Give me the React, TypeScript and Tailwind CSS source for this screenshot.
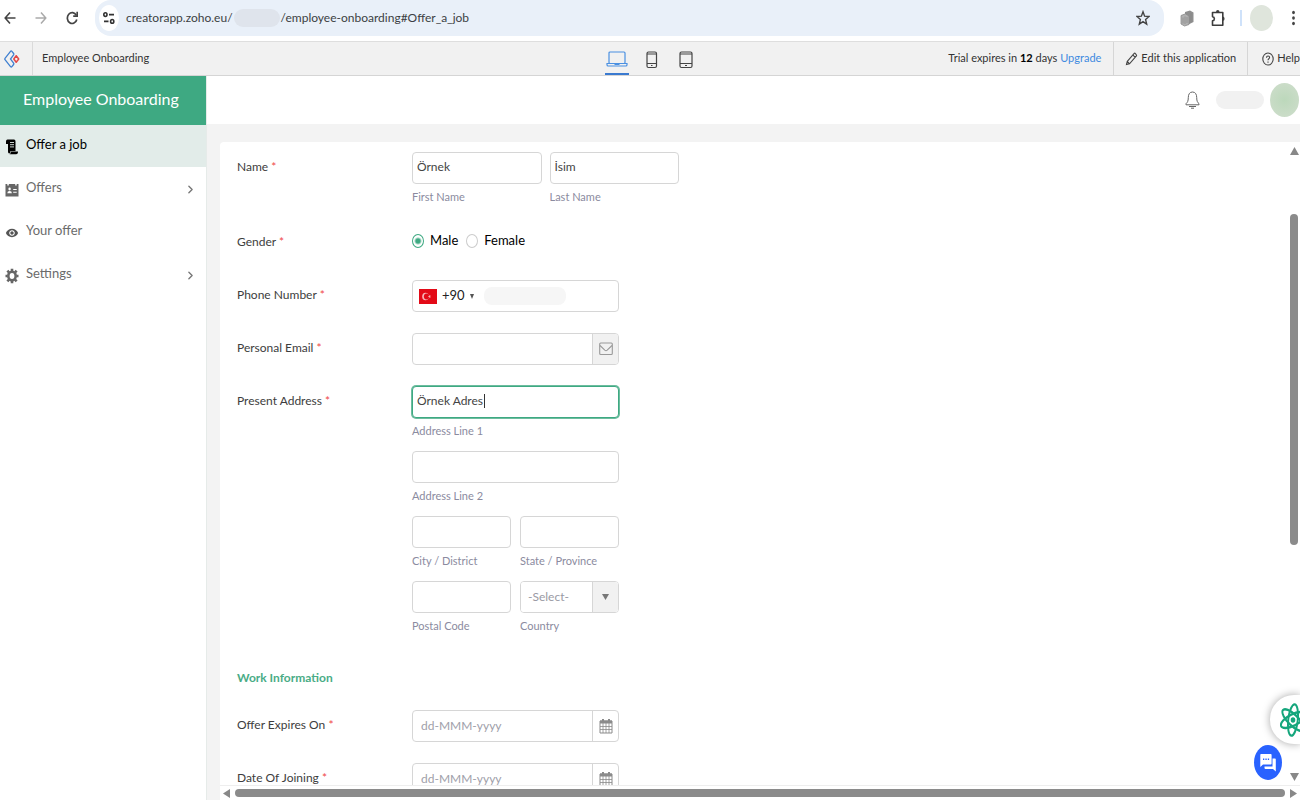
import React from 'react';
import type { ReactNode } from 'react';
import { IoMdEye } from 'react-icons/io';
import { ChevronRight } from 'lucide-react';

const inputClass =
  'block h-8 w-full min-w-0 rounded border border-[#d6d6d6] bg-white px-1 pb-1 text-xs text-[#444] outline-none';

function BrowserBar() {
  return (
    <header className="flex h-[41px] shrink-0 items-start overflow-hidden bg-white text-[#444]">
      <nav className="flex h-9 shrink-0 items-center gap-[19px] pl-1">
        <button aria-label="Back" type="button">
          <svg width="12" height="14" viewBox="0 0 12 14" fill="none" stroke="#444" strokeWidth="1.6">
            <path d="M11.5 7H1.4M6 1.5 1.2 7 6 12.500" />
          </svg>
        </button>
        <button aria-label="Forward" type="button">
          <svg width="12" height="14" viewBox="0 0 12 14" fill="none" stroke="#aaa" strokeWidth="1.5">
            <path d="M.5 7h10.100M6 1.500 10.800 7 6 12.500" />
          </svg>
        </button>
        <button aria-label="Reload" type="button">
          <svg width="12" height="14" viewBox="0 0 12 14" fill="none" stroke="#444" strokeWidth="1.7">
            <path d="M10.300 4.300A4.800 5.400 0 1 0 10.800 8.500" />
            <path d="M11.200.8v4.400H7.200" />
          </svg>
        </button>
      </nav>
      <div className="ml-[17px] flex h-9 min-w-0 flex-1 items-center rounded-2xl bg-[#e9f0f9] px-1">
        <button
          aria-label="Site information"
          type="button"
          className="flex h-[26px] w-5 shrink-0 items-center justify-center rounded-[50%] bg-white"
        >
          <svg width="12" height="14" viewBox="0 0 12 14" fill="none" stroke="#333" strokeWidth="1.600">
            <ellipse cx="2.400" cy="3.600" rx="1.600" ry="1.900" />
            <path d="M6 3.600h5M1 10.400h4.500" />
            <ellipse cx="9.200" cy="10.400" rx="1.600" ry="1.900" />
          </svg>
        </button>
        <p className="ml-[7px] flex min-w-0 flex-1 items-center whitespace-nowrap text-xs text-[#3c3f43]">
          creatorapp.zoho.eu/
          <span className="mx-px h-[18px] w-[46px] rounded-full bg-[#dfe4ec]" />
          /employee-onboarding#Offer_a_job
        </p>
        <button aria-label="Bookmark" type="button" className="mr-2.5">
          <svg width="14" height="16" viewBox="0 0 14 16" fill="none" stroke="#444" strokeWidth="1.400">
            <path d="m7 1.800 1.600 4.400 4.400.3-3.400 3.100 1.100 4.600L7 11.700l-3.700 2.500 1.100-4.600L1 6.500l4.400-.3Z" />
          </svg>
        </button>
      </div>
      <div className="flex h-9 shrink-0 items-center pl-4">
        <svg width="14" height="17" viewBox="0 0 14 17">
          <path d="m5 2 5-1.500 3.500 2V12l-4 2H5Z" fill="#8f8f8f" />
          <path d="m1 5.500 4.500-1.700L9 6v8.500L4.500 16 1 14Z" fill="#b1b1b1" stroke="#8a8a8a" strokeWidth=".8" />
          <path d="M3 7.500v6M5 6.500v7.500M7 7v6M11 3v9" stroke="#888" strokeWidth=".7" />
        </svg>
        <svg className="ml-[17px]" width="15" height="18" viewBox="0 0 15 18" fill="none">
          <path
            d="M1.500 3.500h10.300v12.700H1.500v-4.300c2.500-.3 2.500-4 0-4.300Z"
            stroke="#3d3d3d"
            strokeWidth="1.600"
            strokeLinejoin="round"
          />
          <path d="M5 3a1.700 2 0 0 1 3.500 0ZM12 7.500a2 2.200 0 0 1 0 4.300Z" fill="#3d3d3d" />
        </svg>
        <span className="ml-3.5 h-4 w-0.5 bg-[#cfe2fa]" />
        <span className="ml-2 h-[26px] w-[23px] rounded-[50%] bg-[#dfe5dc]" />
        <svg className="ml-[18px] mr-1" width="5" height="16" viewBox="0 0 5 16" fill="#444">
          <ellipse cx="2.500" cy="2.500" rx="1.400" ry="1.700" />
          <ellipse cx="2.500" cy="8" rx="1.400" ry="1.700" />
          <ellipse cx="2.500" cy="13.500" rx="1.400" ry="1.700" />
        </svg>
      </div>
    </header>
  );
}

function AppBar() {
  return (
    <div className="grid h-[35px] shrink-0 grid-cols-[1fr_auto_1fr] overflow-hidden border-y border-t-[#dedede] border-b-[#d5d5d5] bg-[#f1f1f1] text-[11px] text-[#333]">
      <div className="flex items-center">
        <a href="#home" aria-label="Creator home" className="flex h-full w-[33px] items-center border-r border-[#dadada] pl-1">
          <svg width="16" height="18" viewBox="0 0 16 18" fill="none">
            <path
              d="M6.500 1.300 1 8.300a1 1 0 0 0 0 1.300l5.500 7c.5.500 1 .5 1.400 0l1.700-2.100c.4-.5.300-.9 0-1.400L6.500 9l3.100-4.200c.3-.5.400-.8 0-1.300L7.900 1.300c-.4-.5-1-.5-1.400 0Z"
              stroke="#3f7fd0"
              strokeWidth="1.300"
            />
            <path d="m12.200 5.700 2.500 3.300-2.500 3.300L9.800 9Z" stroke="#e24848" strokeWidth="1.500" strokeLinejoin="round" />
          </svg>
        </a>
        <span className="pl-[9px]">Employee Onboarding</span>
      </div>
      <div className="flex h-full items-stretch gap-3 pl-0.5">
        <button aria-label="Desktop" type="button" className="flex w-6 items-center justify-center border-b-2 border-[#3a7ad0] pt-0.5">
          <svg width="22" height="18" viewBox="0 0 22 18" fill="none" stroke="#4a90e2" strokeWidth="1.200">
            <rect x="3" y="2" width="16" height="11.500" rx="1" />
            <path d="M1 13.500h20v1.200q0 1.300-1.200 1.300H2.200Q1 16 1 14.700ZM8.500 14.500h5" />
          </svg>
        </button>
        <button aria-label="Phone" type="button" className="flex w-[22px] items-center justify-center pt-0.5">
          <svg width="12" height="18" viewBox="0 0 12 18" fill="none" stroke="#444" strokeWidth="1.200">
            <rect x="1" y="1" width="9.500" height="15.500" rx="1.500" />
            <path d="M1 12.500h9.500M1 3h9.500M5 14.500h1.500" />
          </svg>
        </button>
        <button aria-label="Tablet" type="button" className="flex w-[22px] items-center justify-center pt-0.5">
          <svg width="14" height="18" viewBox="0 0 14 18" fill="none" stroke="#444" strokeWidth="1.200">
            <rect x="1" y="1" width="12" height="15.500" rx="1.500" />
            <path d="M1 12.500h12M1 3h12M6 14.500h2" />
          </svg>
        </button>
      </div>
      <div className="flex min-w-0 items-center justify-end whitespace-nowrap">
        <p className="pr-3">
          Trial expires in <b className="text-black">12</b> days{' '}
          <a href="#upgrade" className="text-[#3f8ae0]">
            Upgrade
          </a>
        </p>
        <button type="button" className="flex h-full items-center gap-[3px] border-l border-[#d6d6d6] px-[11px]">
          <svg width="13" height="14" viewBox="0 0 13 14" fill="none" stroke="#444" strokeWidth="1.100">
            <path d="m2.300 9.300 6.900-7.900c.3-.4.700-.4 1 0l1.200 1.400c.3.300.3.700 0 1.100l-6.900 7.900-3 .8Zm5.600-6.400 2.200 2.500M2.300 9.300l2.200 2.500" />
          </svg>
          Edit this application
        </button>
        <button type="button" className="flex h-full items-center gap-[3px] border-l border-[#d6d6d6] pl-3.5">
          <svg width="12" height="14" viewBox="0 0 12 14" fill="none" stroke="#444" strokeWidth="1.100">
            <ellipse cx="6" cy="7" rx="5.200" ry="6" />
            <path d="M4.500 5.700C4.500 3.400 7.600 3.400 7.600 5.500 7.600 6.800 6 6.800 6 8.300M6 9.500v1.200" />
          </svg>
          Help
        </button>
      </div>
    </div>
  );
}

function ScrollIcon() {
  return (
    <svg width="14" height="16" viewBox="0 0 14 16">
      <path d="M2.500.5H9q1.500.2 1.500 2V12h-5v.5q0 2-1.300 2-1.200 0-1.200-2V5H1V2.500Q1 .7 2.500.5Z" fill="#000" />
      <path d="M6 12.500h7v.8q-.2 2-1.800 2H4.500q1.500-.5 1.500-2.800Z" fill="#000" />
      <path d="M5 3.500h4M5 5.700h4M5 7.900h4" stroke="#e2ece9" strokeWidth=".9" />
    </svg>
  );
}

function ContactIcon() {
  return (
    <svg width="14" height="14" viewBox="0 0 14 14">
      <path d="M.5 1h1.800v1.500h1.500V1h6.400v1.500h1.500V1h1.800v12.500H.5Z" fill="#666" />
      <ellipse cx="4.600" cy="6" rx="1.200" ry="1.400" fill="#fff" />
      <path d="M2.300 10.300q0-2.300 2.300-2.300t2.300 2.300ZM8.200 6h3.500v1H8.200ZM8.200 8.700h3.500v1H8.200Z" fill="#fff" />
    </svg>
  );
}

function GearIcon() {
  return (
    <svg width="14" height="16" viewBox="0 0 14 16" fill="none" stroke="#666">
      <ellipse cx="7" cy="8" rx="3.700" ry="4.300" strokeWidth="2.600" />
      <path
        d="M7 .8v2.500M7 12.700v2.500M.5 8h2M11.500 8h2M2.400 2.700 4 4.500M10 11.500l1.600 1.800M11.600 2.700 10 4.500M4 11.500l-1.600 1.800"
        strokeWidth="2.600"
      />
    </svg>
  );
}

function NavItem({ icon, label, active, expandable }: { icon: ReactNode; label: string; active?: boolean; expandable?: boolean }) {
  return (
    <li>
      <a
        href="#page"
        className={
          active
            ? 'flex h-[42px] items-center bg-[#e2ece9] pl-[5px] pr-[9px] text-[13px] text-black'
            : 'flex h-[42px] items-center pl-[5px] pr-[9px] text-[13px] text-[#6b6b6b]'
        }
      >
        <span className="flex w-[21px] pt-0.5">{icon}</span>
        <span className="flex-1 pb-0.5">{label}</span>
        {expandable && <ChevronRight size={13} strokeWidth={2.5} color="#777" />}
      </a>
    </li>
  );
}

function Sidebar() {
  return (
    <aside className="w-[207px] shrink-0 border-r border-[#e6ebe9] bg-white">
      <h1 className="flex h-[49px] items-center bg-[#3ea982] pb-1 pl-[23px] text-base text-white">Employee Onboarding</h1>
      <ul className="flex flex-col gap-px">
        <NavItem active label="Offer a job" icon={<ScrollIcon />} />
        <NavItem expandable label="Offers" icon={<ContactIcon />} />
        <NavItem label="Your offer" icon={<IoMdEye size={14} color="#555" />} />
        <NavItem expandable label="Settings" icon={<GearIcon />} />
      </ul>
    </aside>
  );
}

function Row({ label, htmlFor, children }: { label: string; htmlFor: string; children: ReactNode }) {
  return (
    <div className="flex min-h-8 items-start">
      <label htmlFor={htmlFor} className="w-[175px] shrink-0 text-xs leading-[30px] text-[#3d3d3d]">
        {label} <span className="text-[#f04848]">*</span>
      </label>
      {children}
    </div>
  );
}

function Captioned({ id, caption, children }: { id: string; caption: string; children: ReactNode }) {
  return (
    <div className="min-w-0 flex-1">
      {children}
      <label htmlFor={id} className="block h-[22px] pt-[5px] text-[11px] leading-4 text-[#8b8ba0]">
        {caption}
      </label>
    </div>
  );
}

function CalendarIcon() {
  return (
    <svg width="14" height="16" viewBox="0 0 14 16" fill="none" stroke="#8b8b8b">
      <path d="M1 3h12v12H1Z" />
      <path d="M1 4h12" strokeWidth="3" />
      <path d="M4 1v4M10 1v4" strokeWidth="2" />
      <path d="M1 8.500h12M1 11.500h12M4 5v10M7 5v10M10 5v10" strokeWidth=".8" />
    </svg>
  );
}

function DateField({ id }: { id: string }) {
  return (
    <div className="flex h-8 w-[207px] overflow-hidden rounded border border-[#d6d6d6]">
      <input id={id} placeholder="dd-MMM-yyyy" className="min-w-0 flex-1 px-2 text-xs outline-none placeholder:text-[#a0a0aa]" />
      <button type="button" aria-label="Open calendar" className="flex w-[26px] items-center justify-center border-l border-[#d6d6d6]">
        <CalendarIcon />
      </button>
    </div>
  );
}

function Radio({ id, label, checked }: { id: string; label: string; checked?: boolean }) {
  return (
    <label htmlFor={id} className="flex items-center gap-1.5 text-[13px] text-black">
      <input
        id={id}
        type="radio"
        name="gender"
        defaultChecked={checked}
        className="h-3.5 w-3 appearance-none rounded-[50%] border border-[#ccc] checked:border-[#3ea982] checked:bg-[radial-gradient(circle,#3ea982_2px,white_4px)]"
      />
      {label}
    </label>
  );
}

function OfferForm() {
  return (
    <form className="flex flex-col gap-[21px] pl-[17px] pt-2.5">
      <Row label="Name" htmlFor="first-name">
        <div className="flex w-[267px] gap-2">
          <Captioned id="first-name" caption="First Name">
            <input id="first-name" defaultValue="Örnek" className={inputClass} />
          </Captioned>
          <Captioned id="last-name" caption="Last Name">
            <input id="last-name" defaultValue="İsim" className={inputClass} />
          </Captioned>
        </div>
      </Row>
      <Row label="Gender" htmlFor="male">
        <div className="flex h-7 items-center gap-2">
          <Radio id="male" label="Male" checked />
          <Radio id="female" label="Female" />
        </div>
      </Row>
      <Row label="Phone Number" htmlFor="phone">
        <div className="flex h-8 w-[207px] items-center rounded border border-[#d6d6d6] px-1.5">
          <button type="button" className="flex items-center gap-[5px] text-[13px] text-[#222]">
            <svg width="18" height="15" viewBox="0 0 18 15">
              <path d="M0 0h18v15H0Z" fill="#e30a17" />
              <ellipse cx="6.500" cy="7.500" rx="3.300" ry="3.800" fill="#f6b5b8" />
              <ellipse cx="7.500" cy="7.500" rx="2.600" ry="3" fill="#e30a17" />
              <path d="m8.800 7.500 1.200-.5V5.800l.7 1 1.200-.3-.7 1 .7 1-1.200-.3-.7 1V8Z" fill="#f6b5b8" />
            </svg>
            +90
            <svg width="4" height="5" viewBox="0 0 4 5">
              <path d="M0 0h4L2 5Z" fill="#555" />
            </svg>
          </button>
          <input id="phone" className="ml-2.5 h-[18px] w-[82px] rounded-lg bg-[#f6f6f6] outline-none" />
        </div>
      </Row>
      <Row label="Personal Email" htmlFor="email">
        <div className="flex h-8 w-[207px] overflow-hidden rounded border border-[#d6d6d6]">
          <input id="email" type="email" className="min-w-0 flex-1 px-1 text-xs outline-none" />
          <span className="flex w-[26px] items-center justify-center border-l border-[#d6d6d6] bg-[#f1f1f1]">
            <svg width="14" height="14" viewBox="0 0 14 14" fill="none" stroke="#999" strokeWidth="1.100">
              <rect x=".7" y="1" width="12.600" height="11.500" rx="1" />
              <path d="M1 3.500 5.800 8.200q1.200 1 2.400 0L13 3.500" />
            </svg>
          </span>
        </div>
      </Row>
      <Row label="Present Address" htmlFor="address-1">
        <div className="flex w-[207px] flex-col gap-[11px]">
          <Captioned id="address-1" caption="Address Line 1">
            <div className="relative">
              <input
                id="address-1"
                defaultValue="Örnek Adres"
                className="block h-8 w-full rounded border border-[#3ea982] bg-white px-1 pb-1 text-xs text-[#444] caret-transparent shadow-[0_0_0_1px_#6dbd9f] outline-none"
              />
              <span className="absolute left-[72px] top-2 h-3.5 w-px bg-[#333]" />
            </div>
          </Captioned>
          <Captioned id="address-2" caption="Address Line 2">
            <input id="address-2" className={inputClass} />
          </Captioned>
          <div className="flex gap-[9px]">
            <Captioned id="city" caption="City / District">
              <input id="city" className={inputClass} />
            </Captioned>
            <Captioned id="state" caption="State / Province">
              <input id="state" className={inputClass} />
            </Captioned>
          </div>
          <div className="flex gap-[9px]">
            <Captioned id="postal" caption="Postal Code">
              <input id="postal" className={inputClass} />
            </Captioned>
            <Captioned id="country" caption="Country">
              <div className="relative h-8 overflow-hidden rounded border border-[#d6d6d6]">
                <select id="country" className="h-full w-full appearance-none bg-white pl-[7px] text-xs text-[#9a9aa4] outline-none">
                  <option>-Select-</option>
                </select>
                <span className="pointer-events-none absolute inset-y-0 right-0 flex w-[26px] items-center justify-center border-l border-[#d6d6d6] bg-[#f1f1f1]">
                  <svg width="7" height="6" viewBox="0 0 7 6">
                    <path d="M0 0h7L3.500 6Z" fill="#777" />
                  </svg>
                </span>
              </div>
            </Captioned>
          </div>
        </div>
      </Row>
      <h2 className="h-[33px] pt-[11px] text-xs font-bold leading-[22px] text-[#4aac86]">Work Information</h2>
      <Row label="Offer Expires On" htmlFor="offer-expires">
        <DateField id="offer-expires" />
      </Row>
      <Row label="Date Of Joining" htmlFor="joining">
        <DateField id="joining" />
      </Row>
    </form>
  );
}

function FloatingButtons() {
  return (
    <>
      <button
        type="button"
        aria-label="Assistant"
        className="absolute bottom-14 right-0 flex h-[49px] w-[30px] items-center overflow-hidden rounded-l-3xl bg-white pl-2.5 shadow-[0_0_8px_rgba(0,0,0,0.35)]"
      >
        <svg width="26" height="36" viewBox="0 0 26 36" fill="none" stroke="#15a67c" strokeWidth="2.400" className="shrink-0">
          <g transform="translate(13 18) scale(.82 1)">
            <ellipse rx="5.800" ry="15.800" transform="rotate(8)" />
            <ellipse rx="5.800" ry="15.800" transform="rotate(68)" />
            <ellipse rx="5.800" ry="15.800" transform="rotate(128)" />
            <circle r="2.800" fill="#15a67c" stroke="none" />
          </g>
        </svg>
      </button>
      <button
        type="button"
        aria-label="Chat"
        className="absolute bottom-5 right-[18px] flex h-[35px] w-7 items-center justify-center rounded-[50%] bg-[#2962ff]"
      >
        <svg width="16" height="19" viewBox="0 0 16 19">
          <path d="M12.500 5.500H15q.8 0 .8 1v12L13 16H5.500q-1 0-1-1v-1.500h8Z" fill="#fff" />
          <path d="M1 1h9.800q.8 0 .8 1v8.600q0 1-.8 1H3L.3 14V2q0-1 .7-1Z" fill="#fff" />
          <path d="M3 6.200h1.300M5.400 6.200h1.300M7.800 6.200h1.300" stroke="#2962ff" strokeWidth="1.500" />
        </svg>
      </button>
    </>
  );
}

export default function App() {
  return (
    <div className="relative flex h-screen flex-col overflow-hidden bg-white font-['Lato',sans-serif]">
      <BrowserBar />
      <AppBar />
      <div className="flex min-h-0 flex-1">
        <Sidebar />
        <main className="flex min-w-0 flex-1 flex-col bg-[#f3f3f3]">
          <div className="flex h-12 shrink-0 items-center justify-end bg-white">
            <button aria-label="Notifications" type="button">
              <svg width="15" height="18" viewBox="0 0 15 18" fill="none" stroke="#666" strokeWidth="1">
                <path d="M7.500 1C4.500 1 3.300 3.500 3.300 6.500c0 4-1 5-2.300 6.200v1.100h13v-1.100c-1.300-1.200-2.300-2.200-2.300-6.200C11.700 3.500 10.500 1 7.500 1ZM4 15.500h7M6 17.200h3" />
              </svg>
            </button>
            <span className="ml-4 h-[18px] w-12 rounded-full bg-[#f1f1f1]" />
            <span className="ml-1.5 mr-px h-[34px] w-[29px] rounded-[50%] bg-[radial-gradient(circle,#bcd8bb,#d0decd)]" />
          </div>
          <div className="ml-[13px] mt-[18px] flex min-h-0 flex-1 flex-col rounded-tl bg-white">
            <div className="flex min-h-0 flex-1">
              <div className="min-w-0 flex-1 overflow-hidden">
                <OfferForm />
              </div>
              <div className="flex w-3 shrink-0 flex-col items-center pb-1 pt-[5px]">
                <svg width="9" height="8" viewBox="0 0 9 8">
                  <path d="M4.500 0 9 8H0Z" fill="#888" />
                </svg>
                <div className="mt-[59px] h-[331px] w-2 rounded-full bg-[#8b8b8b]" />
                <svg className="mt-auto" width="9" height="8" viewBox="0 0 9 8">
                  <path d="M0 0h9L4.500 8Z" fill="#888" />
                </svg>
              </div>
            </div>
            <div className="flex h-[15px] shrink-0 items-center gap-[5px] border-t border-[#eee] px-[3px]">
              <svg width="7" height="9" viewBox="0 0 7 9">
                <path d="M7 0v9L0 4.500Z" fill="#888" />
              </svg>
              <div className="h-2 flex-1 rounded-full bg-[#8b8b8b]" />
              <svg width="7" height="9" viewBox="0 0 7 9">
                <path d="M0 0v9l7-4.500Z" fill="#888" />
              </svg>
            </div>
          </div>
        </main>
      </div>
      <FloatingButtons />
    </div>
  );
}
